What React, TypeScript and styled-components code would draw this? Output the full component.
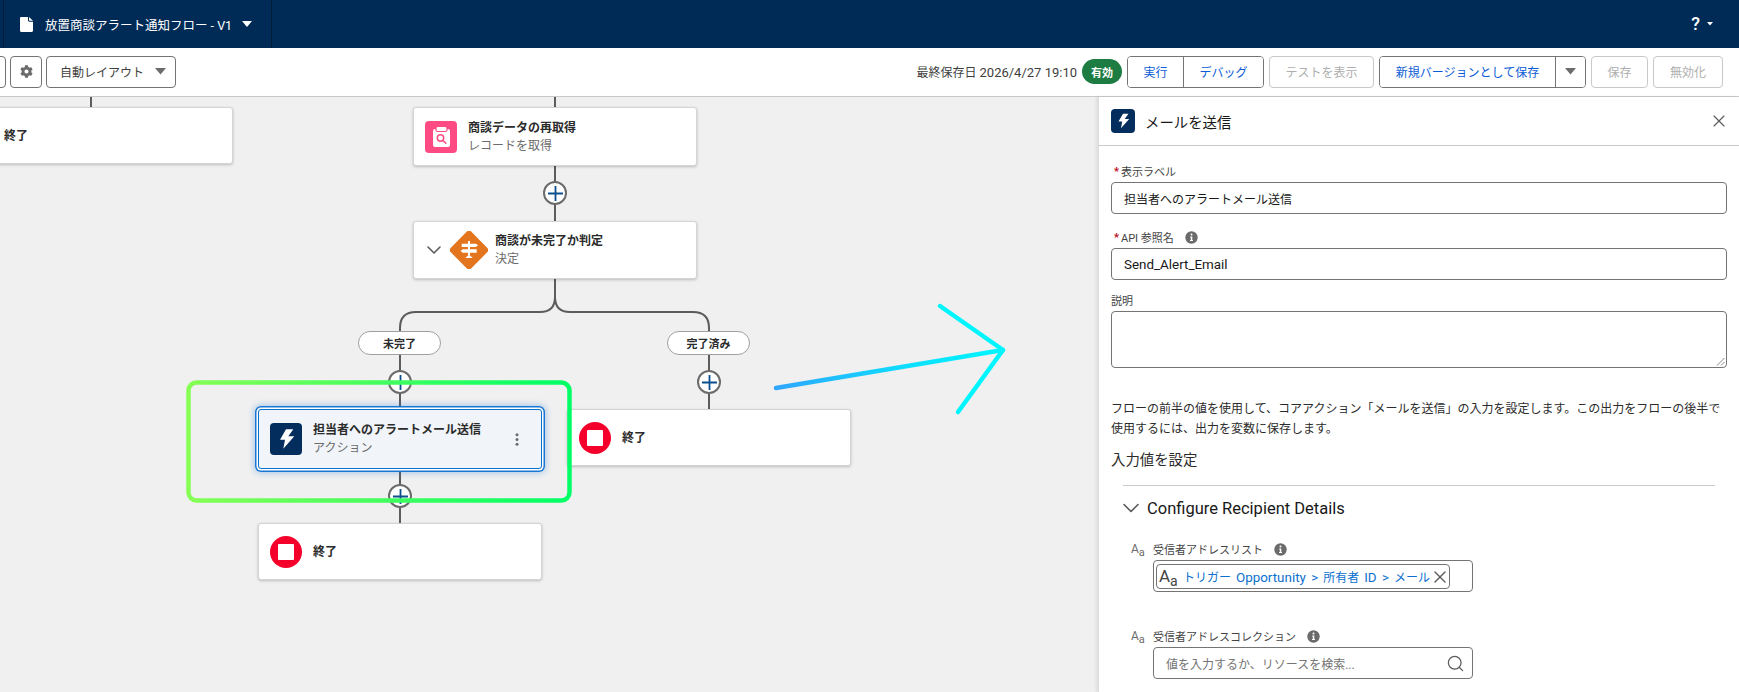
import React from "react";
import styled, { createGlobalStyle } from "styled-components";
import { ChevronDown, Search, X } from "lucide-react";
import { FaCog } from "react-icons/fa";

const FONT = `Roboto, "Noto Sans CJK JP", "Noto Sans", sans-serif`;

const GlobalStyle = createGlobalStyle`
  html, body {
    margin: 0;
    padding: 0;
    width: 100%;
    height: 100%;
    overflow: hidden;
    background: #f0f0f0;
  }
  body {
    font-family: ${FONT};
    font-size: 12px;
    color: #181818;
  }
  * {
    box-sizing: border-box;
  }
`;

function Bolt() {
  return (
    <svg width="100%" height="100%" viewBox="0 0 32 32">
      <path d="M16 6.3 10 16.7h5l-1.7 9 11-12.4h-6l5-7z" fill="#fff" />
    </svg>
  );
}

function Info() {
  return (
    <svg width="13" height="13" viewBox="0 0 13 13">
      <circle cx="6.5" cy="6.5" r="6.2" fill="#6b6b6b" />
      <circle cx="6.5" cy="3.6" r="1" fill="#fff" />
      <path d="M5.2 5.5h2.1v3.6h.7v1H5v-1h.8V6.5h-.6z" fill="#fff" />
    </svg>
  );
}

function Caret({ color = "#6b6b6b", size = 10 }: { color?: string; size?: number }) {
  return (
    <svg width={size} height={size * 0.6} viewBox="0 0 10 6">
      <path d="M0 0h10L5 6z" fill={color} />
    </svg>
  );
}

function RecordIcon() {
  return (
    <svg width="32" height="32" viewBox="0 0 32 32">
      <rect width="32" height="32" rx="4" fill="#ff4b84" />
      <rect x="8" y="8" width="17" height="18" rx="2" fill="#fff" />
      <rect x="11" y="5.5" width="11" height="5" rx="1.5" fill="#fff" stroke="#ff4b84" strokeWidth="1.2" />
      <circle cx="15.5" cy="17" r="3.2" fill="none" stroke="#ff4b84" strokeWidth="1.5" />
      <path d="M18 19.5l2.8 2.8" stroke="#ff4b84" strokeWidth="1.6" strokeLinecap="round" />
    </svg>
  );
}

function DecisionIcon() {
  return (
    <svg width="38" height="38" viewBox="0 0 38 38">
      <rect x="4.5" y="4.5" width="29" height="29" rx="3" fill="#e4751f" transform="rotate(45 19 19)" />
      <path d="M18 10h2v14h-2z" fill="#fff" />
      <path d="M11.7 12.7H26l2 1.65-2 1.65H11.7zM12.7 18.3H26.7v3.4H12.7l-2-1.7z" fill="#fff" />
      <path d="M19 23.5l3.7 3.5H15.3z" fill="#fff" />
    </svg>
  );
}

function FileIcon() {
  return (
    <svg width="13" height="15" viewBox="0 0 13 15">
      <path d="M1.2 0H8v3.6c0 .7.6 1.2 1.2 1.2H13v9c0 .7-.5 1.2-1.2 1.2H1.2C.5 15 0 14.5 0 13.8V1.2C0 .5.5 0 1.2 0z" fill="#fff" />
      <path d="M9 0l4 3.8H9.5C9.2 3.8 9 3.6 9 3.3z" fill="#fff" />
    </svg>
  );
}

function Kebab() {
  return (
    <svg width="4" height="13" viewBox="0 0 4 13">
      <circle cx="2" cy="1.7" r="1.5" fill="#6b6b6b" />
      <circle cx="2" cy="6.5" r="1.5" fill="#6b6b6b" />
      <circle cx="2" cy="11.3" r="1.5" fill="#6b6b6b" />
    </svg>
  );
}

function PlusButton({ x, y }: { x: number; y: number }) {
  return (
    <PlusCircle $x={x} $y={y}>
      <svg width="15" height="15" viewBox="0 0 15 15">
        <path d="M7.5 0v15M0 7.5h15" stroke="#0b4f8f" strokeWidth="1.8" />
      </svg>
    </PlusCircle>
  );
}

function EndNode({ x, y }: { x: number; y: number }) {
  return (
    <Node $x={x} $y={y} $h={57}>
      <StopIcon>
        <StopSquare />
      </StopIcon>
      <NodeTitle>終了</NodeTitle>
    </Node>
  );
}

function TypeMark() {
  return (
    <AaMark>
      A<small>a</small>
    </AaMark>
  );
}

export default function App() {
  return (
    <Page>
      <GlobalStyle />
      <Header>
        <FlowTab>
          <FileIcon />
          <FlowName>放置商談アラート通知フロー - V1</FlowName>
          <Caret color="#fff" />
        </FlowTab>
        <HelpMenu>
          <HelpMark>?</HelpMark>
          <Caret color="#fff" size={6} />
        </HelpMenu>
      </Header>

      <Toolbar>
        <ClippedButton />
        <IconButton>
          <FaCog size={13} color="#6b6b6b" />
        </IconButton>
        <LayoutSelect>
          自動レイアウト
          <Caret size={11} />
        </LayoutSelect>
        <Spacer />
        <SavedAt>
          最終保存日 <SavedTime>2026/4/27 19:10</SavedTime>
        </SavedAt>
        <ActiveBadge>有効</ActiveBadge>
        <ButtonGroup>
          <GroupButton $w={56}>実行</GroupButton>
          <GroupButton $w={81}>デバッグ</GroupButton>
        </ButtonGroup>
        <Button disabled $w={105}>テストを表示</Button>
        <ButtonGroup>
          <GroupButton $w={176}>新規バージョンとして保存</GroupButton>
          <GroupButton $w={31}>
            <Caret size={11} />
          </GroupButton>
        </ButtonGroup>
        <Button disabled $w={57}>保存</Button>
        <Button disabled $w={70}>無効化</Button>
      </Toolbar>

      <Workspace>
        <Canvas>
          <Wires viewBox="0 0 1098 595" width="1098" height="595">
            <g fill="none" stroke="#5c5c5c" strokeWidth="2">
              <path d="M91 0v10M555 0v10M555 68v56" />
              <path d="M555 182v18q0 15-15 15H416q-16 0-16 16v81" />
              <path d="M555 200q0 15 15 15h123q16 0 16 16v81" />
              <path d="M400 372v54" />
            </g>
          </Wires>

          <Node $x={-51} $y={10} $h={57}>
            <NodeText $offset={43}>
              <NodeTitle>終了</NodeTitle>
            </NodeText>
          </Node>

          <Node $x={413} $y={10} $h={59}>
            <RecordIcon />
            <NodeText>
              <NodeTitle>商談データの再取得</NodeTitle>
              <NodeKind>レコードを取得</NodeKind>
            </NodeText>
          </Node>

          <PlusButton x={555} y={96} />

          <Node $x={413} $y={124} $h={58} $gap={7}>
            <NodeChevron>
              <ChevronDown size={24} color="#5c5c5c" strokeWidth={1.6} />
            </NodeChevron>
            <DecisionIcon />
            <NodeText>
              <NodeTitle>商談が未完了か判定</NodeTitle>
              <NodeKind>決定</NodeKind>
            </NodeText>
          </Node>

          <BranchLabel $x={400} $y={234}>未完了</BranchLabel>
          <BranchLabel $x={709} $y={234}>完了済み</BranchLabel>

          <PlusButton x={400} y={285} />
          <PlusButton x={709} y={285} />

          <Node $x={258} $y={312} $h={60} $selected>
            <ActionIcon $size={32}>
              <Bolt />
            </ActionIcon>
            <NodeText>
              <NodeTitle>担当者へのアラートメール送信</NodeTitle>
              <NodeKind>アクション</NodeKind>
            </NodeText>
            <NodeMenu>
              <Kebab />
            </NodeMenu>
          </Node>

          <EndNode x={567} y={312} />
          <PlusButton x={400} y={399} />
          <EndNode x={258} y={426} />

          <Annotations viewBox="0 0 1098 595" width="1098" height="595">
            <defs>
              <linearGradient id="frame" gradientUnits="userSpaceOnUse" x1="187" y1="0" x2="571" y2="0">
                <stop offset="0" stopColor="#86ff55" />
                <stop offset="1" stopColor="#00ff66" />
              </linearGradient>
              <linearGradient id="arrow" gradientUnits="userSpaceOnUse" x1="776" y1="0" x2="1003" y2="0">
                <stop offset="0" stopColor="#2ea6ff" />
                <stop offset="0.6" stopColor="#0ce0ff" />
                <stop offset="1" stopColor="#00f6ff" />
              </linearGradient>
            </defs>
            <rect x="188.5" y="285.5" width="381" height="118" rx="8" fill="none" stroke="url(#frame)" strokeWidth="4.5" />
            <path d="M776 291L1003 253" fill="none" stroke="url(#arrow)" strokeWidth="4.5" strokeLinecap="round" />
            <path d="M940 209L1003 253L958 315" fill="none" stroke="#00f6ff" strokeWidth="4.5" strokeLinecap="round" strokeLinejoin="round" />
          </Annotations>
        </Canvas>

        <Panel>
          <PanelHeader>
            <ActionIcon $size={24}>
              <Bolt />
            </ActionIcon>
            <PanelTitle>メールを送信</PanelTitle>
            <CloseButton>
              <X size={20} strokeWidth={1.4} />
            </CloseButton>
          </PanelHeader>

          <PanelBody>
            <FieldLabel>
              <Required>*</Required>表示ラベル
            </FieldLabel>
            <TextBox>担当者へのアラートメール送信</TextBox>

            <FieldLabel $top={15}>
              <Required>*</Required>API 参照名
              <InfoSlot><Info /></InfoSlot>
            </FieldLabel>
            <TextBox>
              <Latin>Send_Alert_Email</Latin>
            </TextBox>

            <FieldLabel $top={12}>説明</FieldLabel>
            <TextArea>
              <ResizeGrip width="9" height="9" viewBox="0 0 9 9">
                <path d="M1 8.5L8.5 1M5 8.5L8.5 5" stroke="#6b6b6b" strokeWidth="0.8" />
              </ResizeGrip>
            </TextArea>

            <Description>
              フローの前半の値を使用して、コアアクション「メールを送信」の入力を設定します。この出力をフローの後半で使用するには、出力を変数に保存します。
            </Description>

            <SectionHeading>入力値を設定</SectionHeading>

            <Section>
              <SectionToggle>
                <ChevronDown size={28} color="#5c5c5c" strokeWidth={1.4} />
                <SectionName>Configure Recipient Details</SectionName>
              </SectionToggle>

              <InputLabel>
                <TypeMark />
                受信者アドレスリスト
                <InfoSlot><Info /></InfoSlot>
              </InputLabel>
              <ResourceBox>
                <ResourcePill>
                  <PillMark>
                    A<small>a</small>
                  </PillMark>
                  <ResourceName>
                    トリガー <Latin>Opportunity &gt;</Latin> 所有者 <Latin>ID &gt;</Latin> メール
                  </ResourceName>
                  <PillClose>
                    <X size={20} color="#5c5c5c" strokeWidth={1.6} />
                  </PillClose>
                </ResourcePill>
              </ResourceBox>

              <InputLabel $top={36}>
                <TypeMark />
                受信者アドレスコレクション
                <InfoSlot><Info /></InfoSlot>
              </InputLabel>
              <SearchBox>
                <Placeholder>値を入力するか、リソースを検索...</Placeholder>
                <Search size={19} color="#5c5c5c" strokeWidth={1.6} />
              </SearchBox>
            </Section>
          </PanelBody>
        </Panel>
      </Workspace>
    </Page>
  );
}

const Page = styled.div`
  width: 1739px;
  height: 692px;
  overflow: hidden;
  display: flex;
  flex-direction: column;
`;

const Latin = styled.span`
  font-size: 13.4px;
`;

const Header = styled.header`
  height: 48px;
  flex: none;
  background: #012b57;
  display: flex;
  align-items: center;
  justify-content: space-between;
  padding-left: 3px;
  padding-right: 26px;
`;

const FlowTab = styled.div`
  width: 269px;
  height: 48px;
  border-left: 1px solid #001c3b;
  border-right: 1px solid #001c3b;
  padding-left: 16px;
  display: flex;
  align-items: center;
  color: #fff;
`;

const FlowName = styled.span`
  font-size: 12.5px;
  margin: 0 10px 0 12px;
  white-space: nowrap;
`;

const HelpMenu = styled.div`
  display: flex;
  align-items: center;
  gap: 7px;
  color: #fff;
`;

const HelpMark = styled.span`
  font-size: 18px;
  font-weight: 500;
  line-height: 18px;
`;

const Toolbar = styled.div`
  height: 49px;
  flex: none;
  background: #fff;
  border-bottom: 1px solid #c9c9c9;
  display: flex;
  align-items: center;
  gap: 5px;
  padding-right: 16px;
  padding-bottom: 1px;
`;

const ToolButton = styled.button`
  height: 32px;
  background: #fff;
  border: 1px solid #747474;
  border-radius: 4px;
  font-family: ${FONT};
  font-size: 12px;
  padding: 0;
  display: flex;
  align-items: center;
  justify-content: center;
`;

const ClippedButton = styled(ToolButton)`
  width: 30px;
  margin-left: -24px;
  margin-right: -1px;
`;

const IconButton = styled(ToolButton)`
  width: 32px;
`;

const LayoutSelect = styled(ToolButton)`
  width: 130px;
  margin-left: -1px;
  color: #3e3e3c;
  justify-content: space-between;
  padding: 0 9px 0 13px;
`;

const Spacer = styled.div`
  flex: 1;
`;

const SavedAt = styled.span`
  color: #3e3e3c;
  white-space: nowrap;
`;

const SavedTime = styled.span`
  font-size: 13px;
`;

const ActiveBadge = styled.span`
  width: 40px;
  height: 25px;
  border-radius: 13px;
  background: #1c7c42;
  color: #fff;
  font-size: 11px;
  font-weight: 700;
  display: flex;
  align-items: center;
  justify-content: center;
`;

const ButtonGroup = styled.div`
  display: flex;
  height: 32px;
  border: 1px solid #747474;
  border-radius: 4px;
  overflow: hidden;
`;

const GroupButton = styled.button<{ $w: number }>`
  width: ${(p) => p.$w - 1}px;
  background: #fff;
  border: 0;
  border-left: 1px solid #747474;
  color: #0b5cd6;
  font-family: ${FONT};
  font-size: 12px;
  padding: 0;
  display: flex;
  align-items: center;
  justify-content: center;

  &:first-child {
    border-left: 0;
  }
`;

const Button = styled(ToolButton)<{ $w: number }>`
  width: ${(p) => p.$w}px;
  border-color: #c9c9c9;
  color: #aeaeae;
`;

const Workspace = styled.main`
  flex: 1;
  min-height: 0;
  display: flex;
`;

const Canvas = styled.section`
  position: relative;
  flex: 1;
  background: #f0f0f0;
  overflow: hidden;
`;

const Wires = styled.svg`
  position: absolute;
  left: 0;
  top: 0;
`;

const Annotations = styled(Wires)`
  pointer-events: none;
  z-index: 5;
`;

const Node = styled.div<{ $x: number; $y: number; $h: number; $gap?: number; $selected?: boolean }>`
  position: absolute;
  left: ${(p) => p.$x}px;
  top: ${(p) => p.$y}px;
  width: 284px;
  height: ${(p) => p.$h}px;
  padding-left: 11px;
  display: flex;
  align-items: center;
  gap: ${(p) => p.$gap ?? 11}px;
  background: ${(p) => (p.$selected ? "#f1f5f9" : "#fff")};
  border-radius: 3px;
  border: 1px solid ${(p) => (p.$selected ? "#0b6fce" : "#d4d4d4")};
  box-shadow: ${(p) =>
    p.$selected
      ? "0 0 0 1.5px #fff, 0 0 0 3px #1b76d3, 0 0 6px 4px rgba(27, 118, 211, 0.35)"
      : "0 1px 3px rgba(0, 0, 0, 0.22)"};
`;

const NodeChevron = styled.span`
  display: flex;
  margin-left: -3px;
  margin-right: -3px;
`;

const NodeText = styled.div<{ $offset?: number }>`
  display: flex;
  flex-direction: column;
  margin-left: ${(p) => p.$offset ?? 0}px;
  min-width: 0;
`;

const NodeTitle = styled.span`
  font-size: 12px;
  font-weight: 700;
  line-height: 18px;
  color: #2b2b2b;
  white-space: nowrap;
`;

const NodeKind = styled.span`
  font-size: 12px;
  line-height: 18px;
  color: #6b6b6b;
  white-space: nowrap;
`;

const NodeMenu = styled.span`
  margin-left: auto;
  margin-right: 22px;
  display: flex;
`;

const StopIcon = styled.span`
  width: 32px;
  height: 32px;
  flex: none;
  border-radius: 50%;
  background: #f5002b;
  display: flex;
  align-items: center;
  justify-content: center;
`;

const StopSquare = styled.span`
  width: 16px;
  height: 16px;
  background: #fff;
  border-radius: 1px;
`;

const ActionIcon = styled.span<{ $size: number }>`
  width: ${(p) => p.$size}px;
  height: ${(p) => p.$size}px;
  flex: none;
  background: #032d5c;
  border-radius: 4px;
  display: flex;
`;

const PlusCircle = styled.span<{ $x: number; $y: number }>`
  position: absolute;
  left: ${(p) => p.$x - 12}px;
  top: ${(p) => p.$y - 12}px;
  width: 24px;
  height: 24px;
  border-radius: 50%;
  background: #fff;
  border: 2px solid #6b6b6b;
  display: flex;
  align-items: center;
  justify-content: center;
  z-index: 2;
`;

const BranchLabel = styled.span<{ $x: number; $y: number }>`
  position: absolute;
  left: ${(p) => p.$x - 42}px;
  top: ${(p) => p.$y}px;
  width: 83px;
  height: 24px;
  border-radius: 12px;
  border: 1px solid #a0a0a0;
  background: #fff;
  color: #2b2b2b;
  font-size: 11px;
  font-weight: 700;
  display: flex;
  align-items: center;
  justify-content: center;
`;

const Panel = styled.aside`
  width: 641px;
  flex: none;
  background: #fff;
  border-left: 1px solid #dcdcdc;
  box-shadow: -2px 0 3px rgba(0, 0, 0, 0.08);
  z-index: 6;
  display: flex;
  flex-direction: column;
`;

const PanelHeader = styled.div`
  height: 49px;
  flex: none;
  border-bottom: 1px solid #c9c9c9;
  padding: 0 12px;
  display: flex;
  align-items: center;
  gap: 10px;
`;

const PanelTitle = styled.h2`
  margin: 0;
  font-size: 14.4px;
  font-weight: 400;
  color: #181818;
`;

const CloseButton = styled.span`
  margin-left: auto;
  margin-right: -2px;
  display: flex;
  color: #5c5c5c;
`;

const PanelBody = styled.div`
  padding: 17px 12px 0;
`;

const FieldLabel = styled.label<{ $top?: number }>`
  display: flex;
  align-items: center;
  height: 16px;
  margin-top: ${(p) => p.$top ?? 0}px;
  margin-bottom: 3px;
  font-size: 11px;
  color: #444;
`;

const Required = styled.span`
  color: #ba0517;
  width: 10px;
  padding-left: 3px;
  font-weight: 700;
`;

const InfoSlot = styled.span`
  display: flex;
  margin-left: 11px;
`;

const TextBox = styled.div`
  height: 32px;
  border: 1px solid #747474;
  border-radius: 4px;
  padding: 0 12px;
  display: flex;
  align-items: center;
  font-size: 12px;
  color: #181818;
`;

const TextArea = styled.div`
  position: relative;
  height: 57px;
  border: 1px solid #747474;
  border-radius: 4px;
  background: #fff;
`;

const ResizeGrip = styled.svg`
  position: absolute;
  right: 1px;
  bottom: 1px;
`;

const Description = styled.p`
  margin: 31px 0 0;
  font-size: 12px;
  line-height: 20px;
  color: #2b2b2b;
`;

const SectionHeading = styled.h3`
  margin: 12px 0 0;
  font-size: 14.4px;
  line-height: 20px;
  font-weight: 400;
  color: #2b2b2b;
`;

const Section = styled.div`
  margin: 14px 12px 0;
  border-top: 1px solid #c9c9c9;
`;

const SectionToggle = styled.div`
  display: flex;
  align-items: center;
  gap: 2px;
  height: 24px;
  margin-top: 10px;
  margin-left: -6px;

  svg {
    flex: none;
  }
`;

const SectionName = styled.span`
  font-size: 16.5px;
  color: #181818;
`;

const InputLabel = styled.div<{ $top?: number }>`
  display: flex;
  align-items: center;
  height: 16px;
  margin-top: ${(p) => p.$top ?? 21}px;
  margin-bottom: 3px;
  font-size: 11px;
  color: #444;
`;

const AaMark = styled.span`
  width: 30px;
  padding-left: 8px;
  font-size: 12px;
  color: #6b6b6b;

  small {
    font-size: 11px;
    position: relative;
    top: 3px;
  }
`;

const PillMark = styled.span`
  width: 24px;
  flex: none;
  font-size: 17px;
  line-height: 18px;
  color: #444;

  small {
    font-size: 14px;
    position: relative;
    top: 4px;
  }
`;

const ResourceBox = styled.div`
  width: 320px;
  height: 32px;
  margin-left: 30px;
  border: 1px solid #747474;
  border-radius: 4px;
  padding: 3px 2px;
`;

const ResourcePill = styled.div`
  width: 294px;
  height: 25px;
  border: 1px solid #747474;
  border-radius: 4px;
  padding-left: 2px;
  display: flex;
  align-items: center;
`;

const ResourceName = styled.span`
  font-size: 12px;
  color: #0b6fce;
  white-space: nowrap;
  word-spacing: 2px;
`;

const PillClose = styled.span`
  display: flex;
  margin-left: auto;
`;

const SearchBox = styled.div`
  width: 320px;
  height: 32px;
  margin-left: 30px;
  border: 1px solid #747474;
  border-radius: 4px;
  padding: 0 7px 0 12px;
  display: flex;
  align-items: center;
  justify-content: space-between;
`;

const Placeholder = styled.span`
  font-size: 12px;
  color: #747474;
`;
